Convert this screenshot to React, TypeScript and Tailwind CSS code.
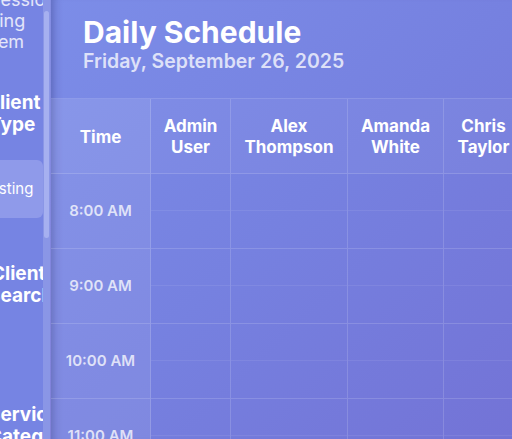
import { Fragment } from 'react';

const staff = [
  { first: 'Admin', last: 'User' },
  { first: 'Alex', last: 'Thompson' },
  { first: 'Amanda', last: 'White' },
  { first: 'Chris', last: 'Taylor' },
  { first: 'Daniel', last: 'Moore' },
];

const hours = ['8:00 AM', '9:00 AM', '10:00 AM', '11:00 AM', '12:00 PM'];

const cols = 'grid grid-cols-[100px_80px_117px_96px_80px_96px]';

function Sidebar() {
  return (
    <aside className="flex w-[50px] shrink-0">
      <div className="w-[43px] overflow-hidden bg-[#7684e3] text-white">
        <div className="-mt-[11px] text-[18px] leading-[21px] text-white/80 whitespace-nowrap">
          <div className="-ml-[11px]">Session</div>
          <div className="-ml-[44px]">Booking</div>
          <div className="-ml-[39px]">System</div>
        </div>

        <div className="mt-[40px] text-[19px] font-bold leading-[22px] whitespace-nowrap">
          <div className="-ml-[14px]">Client</div>
          <div className="-ml-[11px]">Type</div>
        </div>

        <div className="mt-[24px] flex h-[58px] items-center rounded-r-md bg-[#8f9aea] whitespace-nowrap">
          <span className="-ml-[22px] text-[15px]">Existing</span>
        </div>

        <div className="mt-[45px] text-[19px] font-bold leading-[22px] whitespace-nowrap">
          <div className="-ml-[9px]">Client</div>
          <div className="-ml-[12px]">Search</div>
        </div>

        <div className="mt-[97px] text-[19px] font-bold leading-[22px] whitespace-nowrap">
          <div className="-ml-[12px]">Service</div>
          <div className="-ml-[12px]">Categories</div>
        </div>
      </div>

      {/* scrollbar */}
      <div className="w-[7px] bg-[#8a96e6] pt-[11px]">
        <div className="ml-px h-[227px] w-[5px] rounded-full bg-[#a6b0f0]" />
      </div>
    </aside>
  );
}

export default function App() {
  return (
    <div className="flex h-[439px] w-[512px] overflow-hidden bg-gradient-to-br from-[#7887e5] to-[#7372d5] font-['Inter',sans-serif]">
      <Sidebar />

      <main className="min-w-0 flex-1 overflow-hidden border-l border-white/10 bg-gradient-to-br from-[#7c8de8] via-[#7681e0] to-[#7373d6] shadow-[inset_10px_0_10px_-8px_rgba(30,30,90,0.35)]">
        <header className="h-[98px] pl-8 pt-[16px]">
          <h1 className="text-[30px] font-bold leading-[32px] text-white">Daily Schedule</h1>
          <p className="mt-[1px] text-[19.5px] font-semibold leading-[24px] text-white/75">
            Friday, September 26, 2025
          </p>
        </header>

        <div className={`${cols} w-max border-t border-white/15`}>
          <div className="flex h-[75px] items-center justify-center border-r border-b border-white/15 bg-white/10 pt-[3px] text-[17px] font-bold text-white">
            Time
          </div>
          {staff.map((s) => (
            <div
              key={s.first}
              className="flex h-[75px] flex-col items-center justify-center border-r border-b border-white/15 bg-white/[0.04] pt-px text-center text-[17px] font-bold leading-[21px] text-white"
            >
              <span>{s.first}</span>
              <span>{s.last}</span>
            </div>
          ))}

          {hours.map((h) => (
            <Fragment key={h}>
              <div className="flex h-[75px] items-center justify-center border-r border-b border-white/15 bg-white/[0.08] text-[15px] font-semibold text-white/75">
                {h}
              </div>
              {staff.map((s) => (
                <div key={s.first} className="flex h-[75px] flex-col border-r border-b border-white/15">
                  <div className="h-[37px] border-b border-white/[0.07]" />
                  <div className="flex-1" />
                </div>
              ))}
            </Fragment>
          ))}
        </div>
      </main>
    </div>
  );
}
